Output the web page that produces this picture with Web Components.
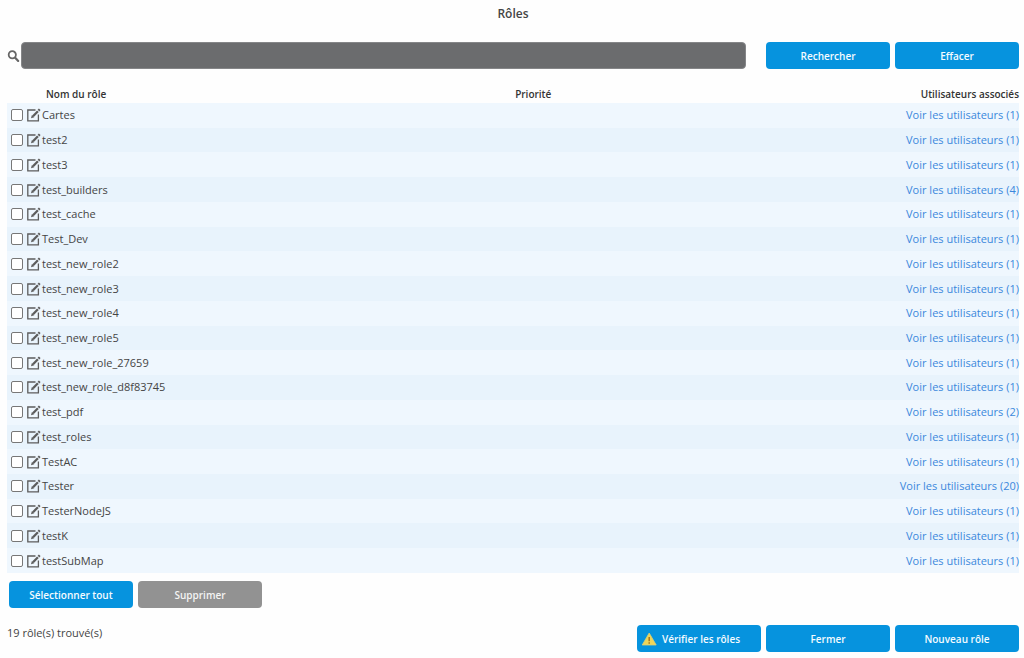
<!DOCTYPE html>
<html lang="fr">
<head>
<meta charset="utf-8">
<meta name="viewport" content="width=device-width, initial-scale=1">
<title>Rôles</title>
<style>
  body { margin: 0; background: #fefefe; color: #444; font: 11px/16px "Open Sans", "Noto Sans", sans-serif; }
</style>
</head>
<body>
<roles-page>
  <span slot="title">Rôles</span>
  <role-search slot="search"></role-search>
  <role-table slot="list"></role-table>
  <action-button slot="selection">Sélectionner tout</action-button>
  <action-button slot="selection" disabled>Supprimer</action-button>
  <span slot="count">19 rôle(s) trouvé(s)</span>
  <action-button slot="actions" leading-icon><warning-icon slot="icon"></warning-icon>Vérifier les rôles</action-button>
  <action-button slot="actions">Fermer</action-button>
  <action-button slot="actions">Nouveau rôle</action-button>
</roles-page>

<script>
  const attach = (host, html) => {
    const template = document.createElement('template');
    template.innerHTML = html;
    const root = host.attachShadow({ mode: 'open' });
    root.append(template.content.cloneNode(true));
    return root;
  };

  customElements.define('roles-page', class extends HTMLElement {
    constructor() {
      super();
      attach(this, `
        <style>
          :host { display: flex; flex-direction: column; box-sizing: border-box; min-height: 100vh; padding: 6px 5px 6px 7px; }
          h1 { margin: 0 0 20px; font-size: 12px; line-height: 16px; font-weight: 600; text-align: center; }
          .list { flex: 1; display: grid; margin-top: 16px; }
          .selection { display: flex; gap: 5px; padding: 8px 2px 0; }
          footer { display: flex; justify-content: space-between; margin-top: 17px; }
          .actions { display: flex; gap: 5px; }
        </style>
        <h1><slot name="title"></slot></h1>
        <slot name="search"></slot>
        <div class="list"><slot name="list"></slot></div>
        <div class="selection"><slot name="selection"></slot></div>
        <footer>
          <slot name="count"></slot>
          <div class="actions"><slot name="actions"></slot></div>
        </footer>`);
    }
  });

  customElements.define('action-button', class extends HTMLElement {
    constructor() {
      super();
      const root = attach(this, `
        <style>
          :host { display: block; width: 124px; flex: none; }
          button { display: flex; align-items: center; justify-content: center; gap: 5px; width: 100%; height: 27px; margin: 0; padding: 0; border: 0; border-radius: 4px; background: #0693de; color: #f4fbff; font: inherit; font-size: 10px; font-weight: 600; white-space: nowrap; }
          :host([leading-icon]) button { justify-content: flex-start; padding-left: 4px; }
          button:disabled { background: #929292; color: #f4f4f4; }
        </style>
        <button type="button"><slot name="icon"></slot><slot></slot></button>`);
      root.querySelector('button').disabled = this.hasAttribute('disabled');
    }
  });

  customElements.define('warning-icon', class extends HTMLElement {
    constructor() {
      super();
      attach(this, `
        <style>:host { display: block; width: 16px; height: 14px; } svg { display: block; }</style>
        <svg width="16" height="14" viewBox="0 0 16 14" aria-hidden="true">
          <path d="M8.2 1 15.2 13H1.2Z" fill="#efd659" stroke="#d8cf78" stroke-width=".8" stroke-linejoin="round"/>
          <path d="M8.2 5v4.2M8.2 10.3v1.4" stroke="#a8741c" stroke-width="1.5"/>
        </svg>`);
    }
  });

  customElements.define('edit-icon', class extends HTMLElement {
    constructor() {
      super();
      attach(this, `
        <style>:host { display: block; width: 14px; height: 14px; } svg { display: block; }</style>
        <svg width="14" height="14" viewBox="0 0 14 14" fill="none" stroke="#5c5c5c" aria-hidden="true">
          <path d="M8.5 2H.8v10.9h10.6V6.5" stroke-width="1.3"/>
          <path d="M6 8.3 10.9 3.2" stroke-width="2.3"/>
          <path d="M11.5 2.6 12.7 1.3" stroke-width="2.3"/>
          <path d="M4 10.3 4.9 7 7.3 9.2Z" fill="#5c5c5c" stroke="none"/>
        </svg>`);
    }
  });

  customElements.define('role-search', class extends HTMLElement {
    constructor() {
      super();
      attach(this, `
        <style>
          :host { display: block; }
          form { display: flex; align-items: center; gap: 5px; margin: 0; }
          label { flex: none; width: 14px; margin-right: -5px; }
          svg { display: block; }
          input { flex: 1; min-width: 0; height: 27px; box-sizing: border-box; margin: 0 15px 0 0; padding: 0 8px; border: 1px solid #858688; border-radius: 4px; background: #6b6c6e; color: #fff; font: inherit; }
        </style>
        <form role="search">
          <label for="query" aria-label="Rechercher un rôle">
            <svg width="14" height="14" viewBox="0 0 14 14" fill="none" stroke="#666" aria-hidden="true">
              <circle cx="5.3" cy="5.8" r="3.6" stroke-width="1.8"/>
              <path d="m8.2 8.7 3 3.2" stroke-width="2.2" stroke-linecap="round"/>
            </svg>
          </label>
          <input id="query" type="text">
          <action-button>Rechercher</action-button>
          <action-button>Effacer</action-button>
        </form>`);
    }
  });

  const roles = [
    ['Cartes', 1], ['test2', 1], ['test3', 1], ['test_builders', 4], ['test_cache', 1],
    ['Test_Dev', 1], ['test_new_role2', 1], ['test_new_role3', 1], ['test_new_role4', 1],
    ['test_new_role5', 1], ['test_new_role_27659', 1], ['test_new_role_d8f83745', 1],
    ['test_pdf', 2], ['test_roles', 1], ['TestAC', 1], ['Tester', 20],
    ['TesterNodeJS', 1], ['testK', 1], ['testSubMap', 1]
  ];

  customElements.define('role-table', class extends HTMLElement {
    constructor() {
      super();
      attach(this, `
        <style>
          :host { display: grid; }
          table { width: 100%; height: 100%; border-collapse: collapse; table-layout: fixed; }
          th, td { box-sizing: border-box; padding: 0; text-align: left; vertical-align: middle; white-space: nowrap; }
          th { height: 18px; font-size: 10px; font-weight: 600; color: #333; }
          th:first-child { padding-left: 39px; }
          .name { width: 40%; }
          .priority { text-align: center; }
          .users { width: 36%; text-align: right; }
          tbody tr { background: #eff7fe; }
          tbody tr:nth-child(even) { background: #e8f3fc; }
          .role { display: flex; align-items: center; padding-left: 4px; }
          input { appearance: none; flex: none; width: 12px; height: 12px; margin: 0 4px 0 0; box-sizing: border-box; border: 1px solid #777; border-radius: 2px; background: #fff; }
          input:checked { background: #0693de; }
          edit-icon { margin-right: 1px; }
          a { color: #3b88dc; text-decoration: none; }
        </style>
        <table>
          <thead><tr><th class="name">Nom du rôle</th><th class="priority">Priorité</th><th class="users">Utilisateurs associés</th></tr></thead>
          <tbody>${roles.map(([name, users], i) => `
            <tr>
              <td><div class="role"><input type="checkbox" id="role-${i}"><edit-icon></edit-icon><label for="role-${i}">${name}</label></div></td>
              <td></td>
              <td class="users"><a href="#utilisateurs-${i}">Voir les utilisateurs (${users})</a></td>
            </tr>`).join('')}
          </tbody>
        </table>`);
    }
  });
</script>
</body>
</html>
